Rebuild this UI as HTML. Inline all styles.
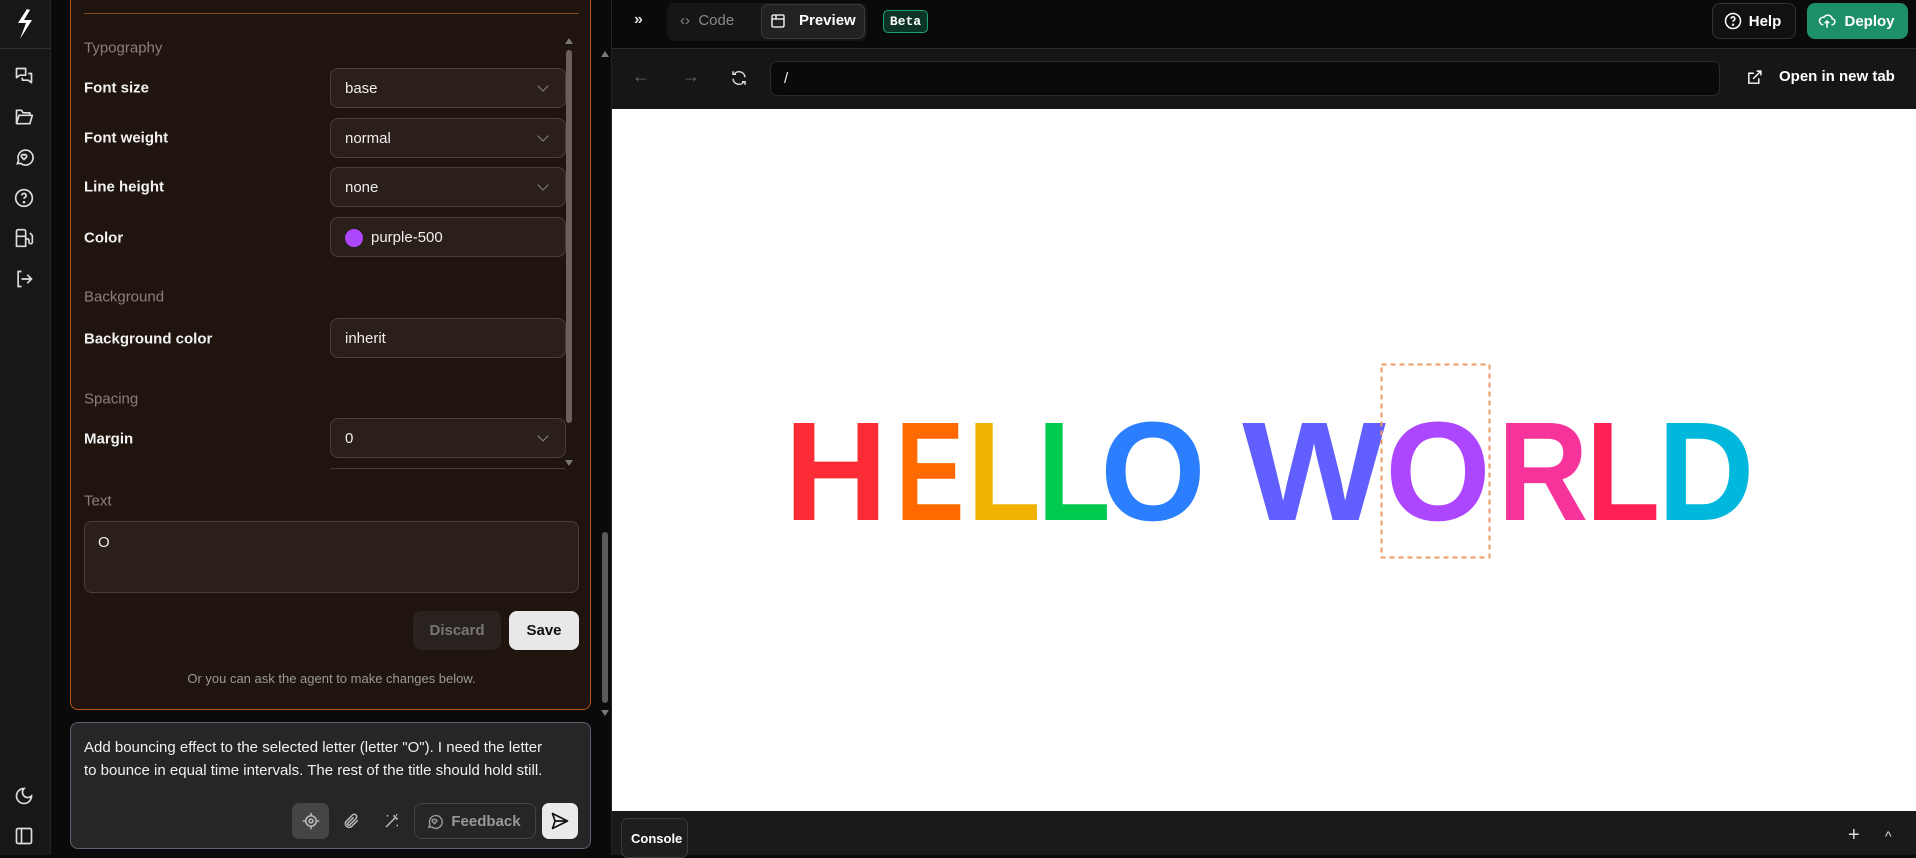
<!DOCTYPE html>
<html><head><meta charset="utf-8"><style>
*{box-sizing:border-box;margin:0;padding:0}
body{width:1916px;height:855px;overflow:hidden;background:#0a0a0a;font-family:"Liberation Sans",sans-serif;position:relative;color:#fff}
.a{position:absolute}
.side{left:0;top:0;width:51px;height:855px;background:#171717;border-right:1px solid #262626}
.ico{position:absolute;left:14px;width:20px;height:20px}
.card{left:70px;top:-2px;width:521px;height:712px;background:#1f140e;border:1px solid #b5561f;border-top:none;border-radius:0 0 8px 8px}
.lbl{position:absolute;left:13px;font-size:15px;font-weight:bold;color:#f2f2f2;transform:translateY(-50%)}
.sec{position:absolute;left:13px;font-size:15px;color:#8a8078;transform:translateY(-50%)}
.sel{position:absolute;left:259px;width:236px;height:40px;background:#2a1f19;border:1px solid #4a3e37;border-radius:8px;font-size:15px;color:#eee;padding:0 0 0 14px;display:flex;align-items:center}
.chev{position:absolute;right:18px;top:13px;width:8px;height:8px;border-right:1.5px solid #888;border-bottom:1.5px solid #888;transform:rotate(45deg)}
.btn{position:absolute;border-radius:8px;display:flex;align-items:center;justify-content:center;font-size:15px;font-weight:bold}
svg{overflow:visible}
</style></head><body>
<div class="a side">
 <svg class="a" style="left:14px;top:8px" width="22" height="32" viewBox="0 0 22 32"><path d="M13 1 L4 15 L12 15 L6 31 L18 12 L10 12 L16 2Z" fill="#fff"/></svg>
 <div class="a" style="left:0;top:48px;width:51px;height:1px;background:#333"></div>
 <svg class="ico" style="top:66px" viewBox="0 0 24 24" fill="none" stroke="#ddd" stroke-width="2" stroke-linejoin="round"><path d="M3 3h11v8H7l-4 3z"/><path d="M17 9h4v11l-4-3h-7v-3"/></svg>
 <svg class="ico" style="top:107px" viewBox="0 0 24 24" fill="none" stroke="#ddd" stroke-width="2" stroke-linejoin="round"><path d="M3 20V4h6l2 3h8v3"/><path d="M3 20l3-10h16l-3 10z"/></svg>
 <svg class="ico" style="top:147px" viewBox="0 0 24 24" fill="none" stroke="#ddd" stroke-width="2"><path d="M4 20l1.5-4A9 9 0 1 1 8 19.5z"/><path d="M12 15l-3-3a2 2 0 0 1 3-2.5 2 2 0 0 1 3 2.5z"/></svg>
 <svg class="ico" style="top:188px" viewBox="0 0 24 24" fill="none" stroke="#ddd" stroke-width="2"><circle cx="12" cy="12" r="10"/><path d="M9.5 9a2.5 2.5 0 1 1 3.5 2.3c-.7.4-1 1-1 1.7"/><circle cx="12" cy="17" r=".6" fill="#ddd"/></svg>
 <svg class="ico" style="top:228px" viewBox="0 0 24 24" fill="none" stroke="#ddd" stroke-width="2"><path d="M3 22V4a2 2 0 0 1 2-2h7a2 2 0 0 1 2 2v18M2 22h13M3 10h11"/><path d="M14 13h2a2 2 0 0 1 2 2v2a2 2 0 0 0 4 0V9l-3-3"/></svg>
 <svg class="ico" style="top:269px" viewBox="0 0 24 24" fill="none" stroke="#ddd" stroke-width="2"><path d="M9 21H5V3h4M16 17l5-5-5-5M21 12H9"/></svg>
 <svg class="ico" style="top:786px" viewBox="0 0 24 24" fill="none" stroke="#ddd" stroke-width="2"><path d="M12 3a6 6 0 0 0 9 9 9 9 0 1 1-9-9z"/></svg>
 <svg class="ico" style="top:826px" viewBox="0 0 24 24" fill="none" stroke="#ddd" stroke-width="2"><rect x="3" y="3" width="18" height="18" rx="2"/><path d="M9 3v18"/></svg>
</div>
<div class="a card">
 <div class="a" style="left:13px;top:15px;width:495px;height:1px;background:#8a4a20"></div>
 <div class="sec" style="top:50px">Typography</div>
 <div class="lbl" style="top:90px">Font size</div>
 <div class="sel" style="top:70px">base<span class="chev"></span></div>
 <div class="lbl" style="top:140px">Font weight</div>
 <div class="sel" style="top:120px">normal<span class="chev"></span></div>
 <div class="lbl" style="top:189px">Line height</div>
 <div class="sel" style="top:169px">none<span class="chev"></span></div>
 <div class="lbl" style="top:240px">Color</div>
 <div class="sel" style="top:219px;padding-left:40px"><span class="a" style="left:14px;top:11px;width:18px;height:18px;border-radius:50%;background:#ad46ff"></span>purple-500</div>
 <div class="sec" style="top:299px">Background</div>
 <div class="lbl" style="top:341px">Background color</div>
 <div class="sel" style="top:320px">inherit</div>
 <div class="sec" style="top:401px">Spacing</div>
 <div class="lbl" style="top:441px">Margin</div>
 <div class="sel" style="top:420px">0<span class="chev"></span></div>
 <div class="a" style="left:259px;top:470px;width:236px;height:2px;border-top:1px solid #4a3e37;border-radius:8px 8px 0 0"></div>
 <div class="a" style="left:494px;top:40px;width:0;height:0;border-left:4px solid transparent;border-right:4px solid transparent;border-bottom:6px solid #777"></div>
 <div class="a" style="left:495px;top:52px;width:6px;height:373px;background:#6b5f58;border-radius:3px"></div>
 <div class="a" style="left:494px;top:462px;width:0;height:0;border-left:4px solid transparent;border-right:4px solid transparent;border-top:6px solid #777"></div>
 <div class="sec" style="top:503px">Text</div>
 <div class="a" style="left:13px;top:523px;width:495px;height:72px;background:#2a1f19;border:1px solid #4a3e37;border-radius:8px;font-size:15px;padding:12px 0 0 13px;color:#eee">O</div>
 <div class="btn" style="left:342px;top:613px;width:88px;height:39px;background:#2a221e;color:#777">Discard</div>
 <div class="btn" style="left:438px;top:613px;width:70px;height:39px;background:#e8e8e8;color:#111">Save</div>
 <div class="a" style="left:0;width:521px;top:673px;text-align:center;font-size:13px;color:#9a9a9a">Or you can ask the agent to make changes below.</div>
</div>
<div class="a" style="left:601px;top:51px;width:0;height:0;border-left:4px solid transparent;border-right:4px solid transparent;border-bottom:6px solid #777"></div>
<div class="a" style="left:602px;top:532px;width:6px;height:171px;background:#5a5a5a;border-radius:3px"></div>
<div class="a" style="left:601px;top:710px;width:0;height:0;border-left:4px solid transparent;border-right:4px solid transparent;border-top:6px solid #777"></div>
<div class="a" style="left:70px;top:722px;width:521px;height:127px;background:#262626;border:1px solid #5a6170;border-radius:8px">
 <div class="a" style="left:13px;top:14px;font-size:15px;line-height:22.5px;color:#f0f0f0;width:500px;white-space:nowrap">Add bouncing effect to the selected letter (letter "O"). I need the letter<br>to bounce in equal time intervals. The rest of the title should hold still.</div>
 <div class="a" style="left:221px;top:80px;width:37px;height:36px;background:#454545;border-radius:7px"></div>
 <svg class="a" style="left:231px;top:89px" width="18" height="18" viewBox="0 0 24 24" fill="none" stroke="#bbb" stroke-width="2"><circle cx="12" cy="12" r="7"/><circle cx="12" cy="12" r="2.5"/><path d="M12 1v4M12 19v4M1 12h4M19 12h4"/></svg>
 <svg class="a" style="left:271px;top:89px" width="18" height="18" viewBox="0 0 24 24" fill="none" stroke="#bbb" stroke-width="2"><path d="M21 11l-8.5 8.5a5 5 0 0 1-7-7L14 4a3.3 3.3 0 0 1 4.7 4.7l-8.5 8.5a1.7 1.7 0 0 1-2.4-2.4L15.5 7"/></svg>
 <svg class="a" style="left:312px;top:89px" width="18" height="18" viewBox="0 0 24 24" fill="none" stroke="#bbb" stroke-width="2"><path d="M4 20L18 6M15 4v3M20 9h-3M19 3l-1.5 1.5M6 4v2M5 5h2M19 17v2M18 18h2"/></svg>
 <div class="btn" style="left:343px;top:80px;width:122px;height:36px;border:1px solid #444;color:#999;font-size:15px;padding-left:22px">Feedback</div>
 <svg class="a" style="left:355px;top:90px" width="17" height="17" viewBox="0 0 24 24" fill="none" stroke="#999" stroke-width="2"><path d="M4 20l1.5-4A9 9 0 1 1 8 19.5z"/><path d="M12 15l-3-3a2 2 0 0 1 3-2.5 2 2 0 0 1 3 2.5z"/></svg>
 <div class="a" style="left:471px;top:80px;width:36px;height:36px;background:#eaeaea;border-radius:7px"></div>
 <svg class="a" style="left:479px;top:88px" width="20" height="20" viewBox="0 0 24 24" fill="none" stroke="#111" stroke-width="2" stroke-linejoin="round"><path d="M3 3l18 9-18 9 3-9z M6 12h15"/></svg>
</div>
<div class="a" style="left:611px;top:0;width:1px;height:855px;background:#222"></div>
<div class="a" style="left:634px;top:11px;font-size:16px;color:#ddd;font-weight:bold">»</div>
<div class="a" style="left:667px;top:3px;width:200px;height:38px;background:#161616;border-radius:8px"></div>
<div class="a" style="left:680px;top:12px;font-size:15px;color:#888">‹›&nbsp;&nbsp;Code</div>
<div class="a" style="left:761px;top:4px;width:104px;height:35px;background:#222;border:1px solid #3a3a3a;border-radius:7px"></div>
<svg class="a" style="left:770px;top:13px" width="16" height="16" viewBox="0 0 24 24" fill="none" stroke="#fff" stroke-width="2"><rect x="3" y="3" width="18" height="18" rx="2"/><path d="M3 9h18M9 3v6"/></svg>
<div class="a" style="left:799px;top:12px;font-size:15px;font-weight:bold">Preview</div>
<div class="a" style="left:883px;top:10px;width:45px;height:23px;background:#0c3326;border:1px solid #1aa37a;border-radius:5px;font:bold 13px 'Liberation Mono',monospace;text-align:center;line-height:21px">Beta</div>
<div class="btn" style="left:1712px;top:3px;width:84px;height:36px;border:1px solid #333;background:#111;padding-left:22px">Help</div>
<svg class="a" style="left:1724px;top:12px" width="18" height="18" viewBox="0 0 24 24" fill="none" stroke="#fff" stroke-width="2"><circle cx="12" cy="12" r="10"/><path d="M9.5 9a2.5 2.5 0 1 1 3.5 2.3c-.7.4-1 1-1 1.7"/><circle cx="12" cy="17" r=".6"/></svg>
<div class="btn" style="left:1807px;top:3px;width:101px;height:36px;background:#1d8f6b;padding-left:24px">Deploy</div>
<svg class="a" style="left:1818px;top:12px" width="18" height="18" viewBox="0 0 24 24" fill="none" stroke="#fff" stroke-width="2"><path d="M7 17a5 5 0 1 1 1-9.9A6 6 0 0 1 19 9a4 4 0 0 1-1 8"/><path d="M12 21v-9M9 15l3-3 3 3"/></svg>
<div class="a" style="left:612px;top:48px;width:1304px;height:61px;background:#161616;border-top:1px solid #2a2a2a"></div>
<div class="a" style="left:632px;top:66px;font-size:18px;color:#666">←</div>
<div class="a" style="left:682px;top:66px;font-size:18px;color:#666">→</div>
<svg class="a" style="left:730px;top:69px" width="18" height="18" viewBox="0 0 24 24" fill="none" stroke="#ddd" stroke-width="2"><path d="M20 11A8 8 0 0 0 5.5 7M4 3v4h4M4 13a8 8 0 0 0 14.5 4M20 21v-4h-4"/></svg>
<div class="a" style="left:770px;top:61px;width:950px;height:35px;background:#0a0a0a;border:1px solid #2a2a2a;border-radius:7px;font-size:15px;color:#eee;padding:8px 0 0 13px">/</div>
<svg class="a" style="left:1746px;top:69px" width="17" height="17" viewBox="0 0 24 24" fill="none" stroke="#fff" stroke-width="2"><path d="M18 13v7H4V6h7M15 3h6v6M10 14L21 3"/></svg>
<div class="a" style="left:1779px;top:68px;font-size:15px;font-weight:bold">Open in new tab</div>
<div class="a" style="left:612px;top:109px;width:1304px;height:702px;background:#fff"></div>
<svg class="a" style="left:0;top:0" width="1916" height="855">
 <g font-family="Liberation Sans, sans-serif" font-weight="bold" font-size="141" text-anchor="middle">
  <text transform="translate(836,520) scale(1.02,1)" fill="#fb2c36">H</text>
  <text transform="translate(930,520) scale(0.73,1)" fill="#ff6900">E</text>
  <text transform="translate(1004,520) scale(0.85,1)" fill="#f0b100">L</text>
  <text transform="translate(1074,520) scale(0.85,1)" fill="#00c950">L</text>
  <text transform="translate(1153,520) scale(0.96,1)" fill="#2b7fff">O</text>
  <text transform="translate(1314,520) scale(1.08,1)" fill="#615fff">W</text>
  <text transform="translate(1438,520) scale(0.96,1)" fill="#ad46ff">O</text>
  <text transform="translate(1543,520) scale(0.89,1)" fill="#f6339a">R</text>
  <text transform="translate(1623,520) scale(0.86,1)" fill="#ff2056">L</text>
  <text transform="translate(1706,520) scale(0.95,1)" fill="#00b8db">D</text>
 </g>
 <rect x="1381.5" y="364.5" width="108" height="193" fill="none" stroke="#ee9a66" stroke-width="2" stroke-dasharray="5 4"/>
</svg>
<div class="a" style="left:612px;top:811px;width:1304px;height:44px;background:#1a1a1a"></div>
<div class="a" style="left:621px;top:818px;width:67px;height:40px;background:#1e1e1e;border:1px solid #3a3a3a;border-radius:7px;font-size:13px;font-weight:bold;padding:12px 0 0 9px">Console</div>
<div class="a" style="left:1848px;top:824px;font-size:20px;color:#ddd">+</div>
<div class="a" style="left:1885px;top:828px;font-size:14px;color:#ddd">^</div>
</body></html>
